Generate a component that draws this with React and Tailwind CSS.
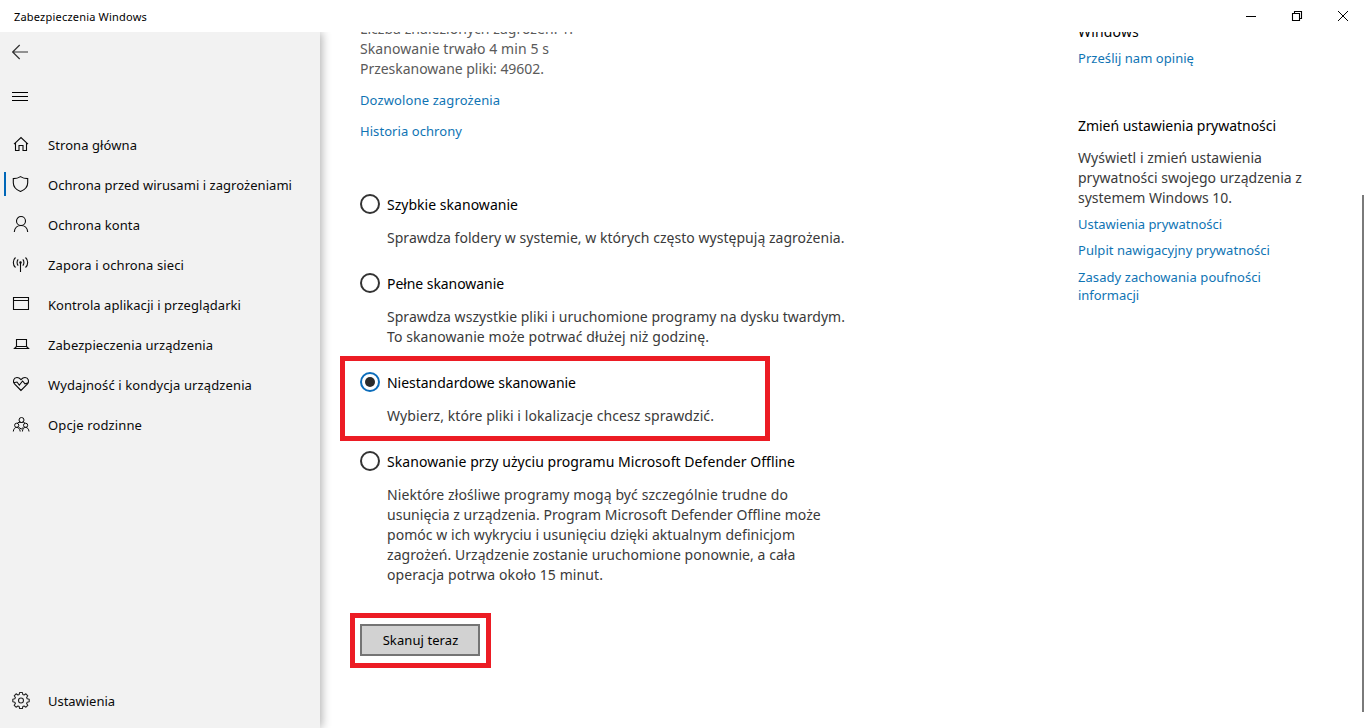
import React from "react";

function Icon({ children, className = "" }) {
  return (
    <svg
      width="18"
      height="18"
      viewBox="0 0 18 18"
      fill="none"
      stroke="currentColor"
      strokeWidth="1.1"
      className={"shrink-0 " + className}
    >
      {children}
    </svg>
  );
}

const icons = {
  home: <path d="M2 9.200 9 2.500l7 6.700M3.500 8v7.500H7v-5h4v5h3.500V8" />,
  shield: <path d="M8.500 1.600C6.500 3 4.200 3.600 1.300 3.600v4.200c0 4.200 2.900 7 7.200 8.700 4.300-1.700 7.200-4.500 7.200-8.700V3.600C12.800 3.600 10.500 3 8.500 1.600Z" />,
  person: (
    <>
      <circle cx="9" cy="6" r="4.500" />
      <path d="M2.300 17c.3-4 3.100-6.500 6.700-6.500s6.400 2.500 6.700 6.500" />
    </>
  ),
  antenna: (
    <>
      <path d="M8.500 8v9" />
      <circle cx="8.500" cy="7.500" r=".7" fill="currentColor" />
      <path d="M6.200 4.300c-1.500 1.700-1.500 4.700 0 6.400M10.800 4.300c1.500 1.700 1.500 4.700 0 6.400M3.500 2.500C.6 5 .6 10 3.500 12.500M13.500 2.500c2.900 2.500 2.900 7.500 0 10" />
    </>
  ),
  window: <path d="M1.500 2.500h15v12h-15zM1.500 5.500h15" />,
  laptop: <path d="M4.500 4.500h10v7h-10zM4.500 11.500 2.500 13.500h14l-2-2" />,
  heart: (
    <>
      <path d="M9 15.500 2.500 9C.5 6.500 1.500 2.500 5 2.500c1.800 0 3 1 4 2.200 1-1.200 2.200-2.200 4-2.200 3.500 0 4.500 4 2.500 6.500z" />
      <path d="M1.500 7.800 5 7l2.300 3 3.300-4 2.400 2.800 3.500-1" />
    </>
  ),
  family: (
    <g strokeWidth="1">
      <circle cx="9.500" cy="5" r="2.500" />
      <circle cx="4.700" cy="10.300" r="2.100" />
      <circle cx="13.600" cy="10.300" r="2.100" />
      <path d="M1.300 16.500c.2-2.500 1.500-4.100 3.400-4.100s3.300 1.600 3.500 4.100M10.400 16.500c.2-2.500 1.400-4.100 3.200-4.100s3.200 1.600 3.400 4.100M5.300 8.200c.8-.9 2.300-1.200 4.200-.7 1.500-.5 2.800-.2 3.600.7M7.200 12.500l2 1.500 2.200-1.500" />
    </g>
  ),
};

const nav = [
  { icon: "home", label: "Strona główna", fit: "tracking-[0.076px]" },
  { icon: "shield", label: "Ochrona przed wirusami i zagrożeniami", fit: "tracking-[0.046px]", active: true },
  { icon: "person", label: "Ochrona konta", fit: "tracking-[0.082px]" },
  { icon: "antenna", label: "Zapora i ochrona sieci", fit: "tracking-[0.117px]" },
  { icon: "window", label: "Kontrola aplikacji i przeglądarki", fit: "tracking-[0.05px]" },
  { icon: "laptop", label: "Zabezpieczenia urządzenia", fit: "tracking-[0.065px]" },
  { icon: "heart", label: "Wydajność i kondycja urządzenia", fit: "tracking-[0.113px]" },
  { icon: "family", label: "Opcje rodzinne", fit: "tracking-[0.122px]" },
];

const options = [
  {
    label: "Szybkie skanowanie",
    fit: "tracking-[0.026px]",
    lines: [["Sprawdza foldery w systemie, w których często występują zagrożenia.", "tracking-[0.03px]"]],
  },
  {
    label: "Pełne skanowanie",
    fit: "tracking-[-0.066px]",
    lines: [
      ["Sprawdza wszystkie pliki i uruchomione programy na dysku twardym.", "tracking-[0.03px]"],
      ["To skanowanie może potrwać dłużej niż godzinę.", "tracking-[0.079px]"],
    ],
  },
  {
    label: "Niestandardowe skanowanie",
    fit: "tracking-[-0.025px]",
    checked: true,
    lines: [["Wybierz, które pliki i lokalizacje chcesz sprawdzić.", "tracking-[0.083px]"]],
  },
  {
    label: "Skanowanie przy użyciu programu Microsoft Defender Offline",
    fit: "tracking-[0.058px]",
    lines: [
      ["Niektóre złośliwe programy mogą być szczególnie trudne do", "tracking-[0.095px]"],
      ["usunięcia z urządzenia. Program Microsoft Defender Offline może", "tracking-[0.03px]"],
      ["pomóc w ich wykryciu i usunięciu dzięki aktualnym definicjom", "tracking-[0.05px]"],
      ["zagrożeń. Urządzenie zostanie uruchomione ponownie, a cała", "tracking-[0.05px]"],
      ["operacja potrwa około 15 minut.", "tracking-[0.091px]"],
    ],
  },
];

function TitleBar() {
  return (
    <header className="relative z-10 flex h-8 shrink-0 items-center justify-between bg-white pl-3.5">
      <span className="pt-0.5 text-[11px] tracking-[0.2px] text-black">Zabezpieczenia Windows</span>
      <div className="flex text-black">
        <span className="flex w-[46px] items-center justify-center">
          <svg width="12" height="12" viewBox="0 0 12 12" fill="none" stroke="currentColor"><path d="M1 6.500h10" /></svg>
        </span>
        <span className="flex w-[46px] items-center justify-center">
          <svg width="12" height="12" viewBox="0 0 12 12" fill="none" stroke="currentColor" strokeWidth="1.100"><path d="M1.500 3.500h7v7h-7zM3.500 3.500v-2h7v7h-2" /></svg>
        </span>
        <span className="flex w-[46px] items-center justify-center">
          <svg width="12" height="12" viewBox="0 0 12 12" fill="none" stroke="currentColor"><path d="m1 1 10 10M11 1 1 11" /></svg>
        </span>
      </div>
    </header>
  );
}

function Sidebar() {
  return (
    <aside className="relative z-[1] flex w-80 shrink-0 flex-col bg-[#f2f2f2] text-[13px] text-[#0a0a0a] shadow-[2px_0_9px_rgba(0,0,0,0.3)]">
      <div className="flex h-10 items-center pl-3">
        <svg width="17" height="16" viewBox="0 0 17 16" fill="none" stroke="#333" strokeWidth="1.200"><path d="M.7 8H16M7.700 1 .7 8l7 7" /></svg>
      </div>
      <div className="h-[53px] pl-3 pt-[19px]">
        <svg width="16" height="12" viewBox="0 0 16 12" stroke="#000" strokeWidth="1.100"><path d="M0 1.500h16M0 5.500h16M0 9.500h16" /></svg>
      </div>
      <nav className="flex flex-col">
        {nav.map((n) => (
          <div key={n.label} className="flex h-10 items-center pl-1">
            <span className={n.active ? "mb-0.5 h-6 w-0.5 bg-[#0067b8]" : "h-6 w-0.5"} />
            <Icon className="mb-0.5 ml-1.5">{icons[n.icon]}</Icon>
            <span className={"ml-[18px] whitespace-nowrap leading-5 " + n.fit}>{n.label}</span>
          </div>
        ))}
      </nav>
      <div className="mt-auto mb-[7px] flex h-10 items-center pl-3">
        <svg width="18" height="18" viewBox="0 0 18 18" fill="none" stroke="#222" strokeWidth="1.100" strokeLinejoin="round" className="mb-0.5">
          <path d="M7.600 1.500h2.800l.4 2 1.300.5 1.800-1.200 1.900 2-1.200 1.700.6 1.300 2 .4v2.600l-2 .4-.6 1.300 1.200 1.800-1.900 1.900-1.800-1.200-1.300.6-.4 2H7.600l-.4-2-1.300-.6-1.800 1.200-1.900-1.900 1.200-1.800-.6-1.300-2-.4V8.200l2-.4.6-1.300-1.200-1.700 1.900-2L5.900 4l1.300-.5z" />
          <circle cx="9" cy="9.500" r="2.500" />
        </svg>
        <span className="ml-[18px] leading-5 tracking-[-0.03px]">Ustawienia</span>
      </div>
    </aside>
  );
}

function Radio({ checked }) {
  return (
    <span
      className={
        "flex size-5 shrink-0 items-center justify-center rounded-full border-2 bg-white " +
        (checked ? "border-[#0c6dbb]" : "border-[#333]")
      }
    >
      {checked && <span className="size-2.5 rounded-full bg-[#2b2b2b]" />}
    </span>
  );
}

function ScanOption({ option }) {
  return (
    <div className="relative">
      <div className="flex h-5 items-start">
        <Radio checked={option.checked} />
        <span className={"ml-[7px] whitespace-nowrap pt-px leading-5 text-black " + option.fit}>{option.label}</span>
      </div>
      <div className="mt-3.5 pl-[27px] leading-5 text-[#3a3a3a]">
        {option.lines.map(([text, fit]) => (
          <p key={text} className={"whitespace-nowrap " + fit}>{text}</p>
        ))}
      </div>
      {option.checked && (
        <div className="pointer-events-none absolute -left-5 -top-4 h-[85px] w-[430px] border-[5px] border-[#ec1c24]" />
      )}
    </div>
  );
}

export default function App() {
  return (
    <div className="flex h-[728px] w-[1366px] flex-col overflow-hidden bg-white font-['Noto_Sans','Open_Sans',sans-serif]">
      <TitleBar />
      <div className="flex min-h-0 flex-1">
        <Sidebar />
        <main className="flex min-w-0 flex-1 overflow-hidden pl-10 text-sm">
          <section className="-mt-[13px] w-[718px] shrink-0">
            <div className="leading-5 text-[#5a5a5a]">
              <p className="tracking-[0.049px]">Liczba znalezionych zagrożeń: 1.</p>
              <p className="tracking-[0.077px]">Skanowanie trwało 4 min 5 s</p>
              <p className="tracking-[-0.028px]">Przeskanowane pliki: 49602.</p>
            </div>
            <div className="mt-[11px] flex flex-col gap-[11px] text-[13px] leading-5 text-[#0f74b4]">
              <a className="tracking-[0.125px]">Dozwolone zagrożenia</a>
              <a className="tracking-[0.066px]">Historia ochrony</a>
            </div>
            <div className="mt-[53px] flex flex-col gap-[25px]">
              {options.map((o) => (
                <ScanOption key={o.label} option={o} />
              ))}
            </div>
            <div className="-ml-2.5 mt-7 h-[55px] w-[141px] border-[5px] border-[#ec1c24] p-[5px]">
              <button className="mt-px block h-8 w-[120px] border-2 border-[#747474] bg-[#d2d2d2] pl-px text-[13px] leading-7 tracking-[0.08px] text-black">
                Skanuj teraz
              </button>
            </div>
          </section>
          <aside className="-mt-2.5 flex-1 leading-5">
            <p className="tracking-[0.172px] text-black">Windows</p>
            <a className="mt-1.5 block text-[13px] tracking-[0.045px] text-[#0f74b4]">Prześlij nam opinię</a>
            <h2 className="mt-12 tracking-[-0.037px] text-black">Zmień ustawienia prywatności</h2>
            <div className="mt-3 text-[#3a3a3a]">
              <p className="tracking-[0.026px]">Wyświetl i zmień ustawienia</p>
              <p>prywatności swojego urządzenia z</p>
              <p className="tracking-[-0.021px]">systemem Windows 10.</p>
            </div>
            <div className="mt-[7px] flex flex-col gap-2 text-[13px] leading-[18px] text-[#0f74b4]">
              <a className="tracking-[-0.027px]">Ustawienia prywatności</a>
              <a className="tracking-[0.032px]">Pulpit nawigacyjny prywatności</a>
              <a className="mt-px tracking-[0.067px]">
                Zasady zachowania poufności
                <br />
                <span className="tracking-[-0.049px]">informacji</span>
              </a>
            </div>
          </aside>
          <div className="mr-0.5 mt-[163px] h-[517px] w-0.5 shrink-0 bg-[#7a7a7a]" />
        </main>
      </div>
    </div>
  );
}
